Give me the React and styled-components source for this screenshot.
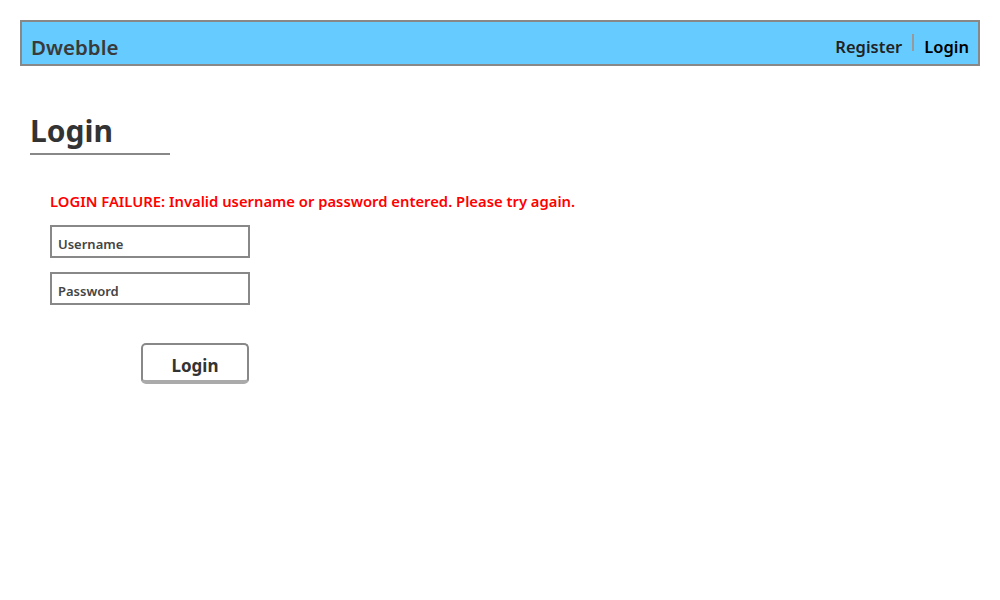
import React from 'react'
import styled, { createGlobalStyle } from 'styled-components'

const Global = createGlobalStyle`
  body {
    margin: 0;
    padding: 20px;
    background: #fff;
    font-family: 'Noto Sans', 'Open Sans', sans-serif;
    color: #333;
  }
`

export default function App() {
  return (
    <>
      <Global />
      <Header>
        <Brand>Dwebble</Brand>
        <Nav>
          <NavLink>Register</NavLink>
          <Sep />
          <NavLink active>Login</NavLink>
        </Nav>
      </Header>
      <Main>
        <Title>Login</Title>
        <Form>
          <Error>LOGIN FAILURE: Invalid username or password entered. Please try again.</Error>
          <Input placeholder='Username' />
          <Input placeholder='Password' type='password' />
          <ButtonRow>
            <Button>Login</Button>
          </ButtonRow>
        </Form>
      </Main>
    </>
  )
}

const Header = styled.div`
  box-sizing: border-box;
  height: 46px;
  background-color: #66ccff;
  border: 2px solid #888;
  display: flex;
  align-items: flex-end;
  justify-content: space-between;
  padding: 0 9px 5px 9px;
`

const Brand = styled.div`
  font-size: 20.5px;
  font-weight: 600;
  color: #3a3a3a;
  line-height: 24px;
`

const Nav = styled.div`
  display: flex;
  align-items: center;
  gap: 10px;
`

const NavLink = styled.a`
  font-size: 16.5px;
  font-weight: 600;
  line-height: 22px;
  color: ${p => (p.active ? '#000' : '#222')};
  cursor: pointer;
`

const Sep = styled.span`
  width: 2px;
  height: 17px;
  background: #999;
  margin-bottom: 8px;
`

const Main = styled.div`
  padding: 43px 0 0 10px;
`

const Title = styled.h1`
  display: inline-block;
  margin: 0;
  width: 140px;
  font-size: 30px;
  font-weight: 700;
  color: #333;
  line-height: 44px;
  border-bottom: 2px solid #888;
`

const Form = styled.div`
  padding: 34px 0 0 20px;
  display: flex;
  flex-direction: column;
  align-items: flex-start;
`

const Error = styled.div`
  color: #ff0000;
  font-size: 14.8px;
  font-weight: 600;
  line-height: 24px;
  margin-bottom: 12px;
`

const Input = styled.input`
  box-sizing: border-box;
  width: 200px;
  height: 33px;
  border: 2px solid #888;
  margin: 0 0 14px 0;
  padding: 4px 6px 0 6px;
  font-family: inherit;
  font-size: 13px;
  font-weight: 600;
  outline: none;
  &::placeholder {
    color: #444;
  }
`

const ButtonRow = styled.div`
  width: 199px;
  display: flex;
  justify-content: flex-end;
  padding-top: 24px;
`

const Button = styled.button`
  box-sizing: border-box;
  width: 108px;
  height: 41px;
  border: 2px solid #888;
  border-bottom: 4px solid #aaa;
  border-radius: 5px;
  background: #fff;
  font-family: inherit;
  font-size: 17px;
  font-weight: 700;
  color: #333;
  padding-top: 6px;
  cursor: pointer;
`
